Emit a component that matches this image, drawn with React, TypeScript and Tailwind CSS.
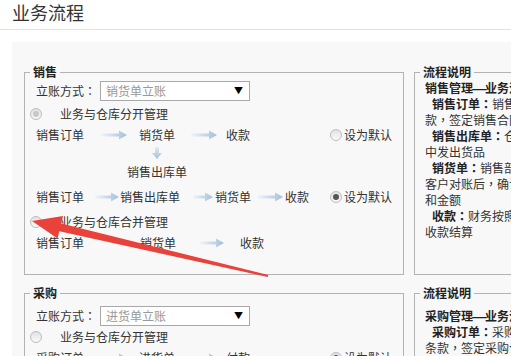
import React from 'react';

const font = "font-['Noto_Sans_CJK_SC','Noto_Sans',sans-serif]";

// full-width punctuation centred, like the reference
function T({ s }: { s: string }) {
  const parts = s.split(/([：，—])/);
  return (
    <>
      {parts.map((p, i) =>
        p === '：' || p === '，' ? (
          <span key={i} className="font-['Noto_Sans_CJK_TC',sans-serif]">{p}</span>
        ) : p === '—' ? (
          <span key={i} className="inline-block w-[12px] text-center">
            <span className="inline-block scale-x-[1.5]">{p}</span>
          </span>
        ) : (
          <React.Fragment key={i}>{p}</React.Fragment>
        )
      )}
    </>
  );
}

function Arrow({ w = 26 }: { w?: number }) {
  return (
    <svg width={w} height={10} viewBox={`0 0 ${w} 10`} className="shrink-0">
      <defs>
        <linearGradient id="flowArrow" x1="0" x2="1" y1="0" y2="0">
          <stop offset="0" stopColor="#f0f4f9" />
          <stop offset="1" stopColor="#a3bfdb" />
        </linearGradient>
      </defs>
      <path d={`M0 3.5H${w - 8}V0.5L${w} 5L${w - 8} 9.5V6.5H0Z`} fill="url(#flowArrow)" />
    </svg>
  );
}

function DownArrow() {
  return (
    <svg width={10} height={12} viewBox="0 0 10 12">
      <defs>
        <linearGradient id="flowDown" x1="0" x2="0" y1="0" y2="1">
          <stop offset="0" stopColor="#e3ebf3" />
          <stop offset="1" stopColor="#a3bfdb" />
        </linearGradient>
      </defs>
      <path d="M3 0H7V6H10L5 12L0 6H3Z" fill="url(#flowDown)" />
    </svg>
  );
}

function Radio({ checked = false, dim = false }: { checked?: boolean; dim?: boolean }) {
  return (
    <span className="inline-flex w-[12px] h-[12px] shrink-0 items-center justify-center rounded-full border border-[#bcbcbc] bg-gradient-to-b from-[#e2e2e2] to-[#fafafa]">
      {checked && (
        <span className={`w-[6px] h-[6px] rounded-full ${dim ? 'bg-[#c8c8c8]' : 'bg-[#555]'}`} />
      )}
    </span>
  );
}

function Legend({ children }: { children: React.ReactNode }) {
  return (
    <legend className="ml-[5px] px-[3px] text-[12px] leading-[14px] font-bold text-[#222]">{children}</legend>
  );
}

function SelectBox({ value }: { value: string }) {
  return (
    <div className="flex items-center h-[20px]">
      <span className="w-[64px]"><T s="立账方式：" /></span>
      <div className="w-[150px] h-[20px] border border-[#a9a9a9] bg-white flex items-center justify-between pl-[5px] pr-[6px]">
        <span className="text-[#999]">{value}</span>
        <span className="text-[9px] text-black">▼</span>
      </div>
    </div>
  );
}

function RadioRow({ label, checked, dim }: { label: string; checked?: boolean; dim?: boolean }) {
  return (
    <div className="flex items-center h-[22px] -ml-[6px]">
      <Radio checked={checked} dim={dim} />
      <span className="ml-[18px]">{label}</span>
    </div>
  );
}

function Default({ checked }: { checked?: boolean }) {
  return (
    <span className="flex items-center">
      <Radio checked={checked} />
      <span className="ml-[2px]">设为默认</span>
    </span>
  );
}

function Line({ label, text, indent }: { label?: string; text: string; indent?: boolean }) {
  return (
    <div className={`whitespace-nowrap h-[16px] leading-[16px] ${indent ? 'pl-[7px]' : ''}`}>
      {label && <b className="font-bold text-[#222]"><T s={label} /></b>}
      <T s={text} />
    </div>
  );
}

export default function App() {
  return (
    <div className={`relative w-[511px] h-[356px] overflow-hidden bg-white text-[12px] leading-[16px] text-[#333] ${font}`}>
      {/* title */}
      <div className="h-[30px] border-b border-[#e2e2e2] pl-[12px] pt-[1px]">
        <span className="text-[18px] leading-[22px] text-[#333]">业务流程</span>
      </div>

      <div className="mt-[12px] ml-[12px] bg-[#f8f8f8] pl-[12px] pt-[23px] pb-[20px] flex items-start gap-[10px] w-[700px]">
        {/* left column */}
        <div className="flex flex-col shrink-0">
          <fieldset className="shrink-0 w-[380px] h-[210px] border border-[#b3b3b3]">
            <Legend>销售</Legend>
            <div className="pl-[11px] pt-[2px]">
              <SelectBox value="销货单立账" />
              <div className="mt-[2px]" />
              <RadioRow label="业务与仓库分开管理" checked dim />
              <div className="flex items-center h-[20px]">
                <span className="w-[48px]">销售订单</span>
                <span className="ml-[17px]"><Arrow /></span>
                <span className="ml-[12px]">销货单</span>
                <span className="ml-[16px]"><Arrow /></span>
                <span className="ml-[9px]">收款</span>
                <span className="ml-[80px]"><Default /></span>
              </div>
              <div className="flex items-center h-[16px] pl-[116px]">
                <DownArrow />
              </div>
              <div className="flex items-center h-[22px] pl-[91px]">销售出库单</div>
              <div className="flex items-center h-[28px]">
                <span className="w-[48px]">销售订单</span>
                <span className="ml-[11px]"><Arrow w={24} /></span>
                <span className="ml-[1px]">销售出库单</span>
                <span className="ml-[13px]"><Arrow w={20} /></span>
                <span className="ml-[2px]">销货单</span>
                <span className="ml-[6px]"><Arrow /></span>
                <span className="ml-[2px]">收款</span>
                <span className="ml-[21px]"><Default checked /></span>
              </div>
              <RadioRow label="业务与仓库合并管理" />
              <div className="flex items-center h-[20px]">
                <span className="w-[48px]">销售订单</span>
                <span className="ml-[56px]">销货单</span>
                <span className="ml-[24px]"><Arrow w={24} /></span>
                <span className="ml-[16px]">收款</span>
              </div>
            </div>
          </fieldset>

          <fieldset className="shrink-0 mt-[11px] w-[380px] h-[210px] border border-[#b3b3b3]">
            <Legend>采购</Legend>
            <div className="pl-[11px] pt-[6px]">
              <SelectBox value="进货单立账" />
              <RadioRow label="业务与仓库分开管理" />
              <div className="flex items-center h-[20px]">
                <span className="w-[48px]">采购订单</span>
                <span className="ml-[17px]"><Arrow /></span>
                <span className="ml-[12px]">进货单</span>
                <span className="ml-[16px]"><Arrow /></span>
                <span className="ml-[9px]">付款</span>
                <span className="ml-[80px]"><Default checked /></span>
              </div>
            </div>
          </fieldset>
        </div>

        {/* right column */}
        <div className="flex flex-col shrink-0">
          <fieldset className="shrink-0 w-[200px] h-[210px] border border-[#b3b3b3]">
            <Legend>流程说明</Legend>
            <div className="pl-[10px] pt-[1px]">
              <div className="whitespace-nowrap h-[16px] font-bold text-[#222]"><T s="销售管理—业务流程" /></div>
              <Line indent label="销售订单：" text="销售部门与客户洽谈价格、付" />
              <Line text="款，签定销售合同" />
              <Line indent label="销售出库单：" text="仓库根据订单从仓库" />
              <Line text="中发出货品" />
              <Line indent label="销货单：" text="销售部门根据出库单与" />
              <Line text="客户对账后，确认销售数量" />
              <Line text="和金额" />
              <Line indent label="收款：" text="财务按照销货单进行" />
              <Line text="收款结算" />
            </div>
          </fieldset>

          <fieldset className="shrink-0 mt-[11px] w-[200px] h-[210px] border border-[#b3b3b3]">
            <Legend>流程说明</Legend>
            <div className="pl-[10px] pt-[8px]">
              <div className="whitespace-nowrap h-[16px] font-bold text-[#222]"><T s="采购管理—业务流程" /></div>
              <Line indent label="采购订单：" text="采购部门与供应商洽谈" />
              <Line text="条款，签定采购合同" />
            </div>
          </fieldset>
        </div>
      </div>

      {/* annotation arrow */}
      <svg className="absolute inset-0 pointer-events-none" width={511} height={356}>
        <polygon
          points="32,221 63,216 61.3,223.6 268.3,275 267.7,277 59.3,231.2 57.6,238.5"
          fill="#e8423b"
        />
      </svg>
    </div>
  );
}
